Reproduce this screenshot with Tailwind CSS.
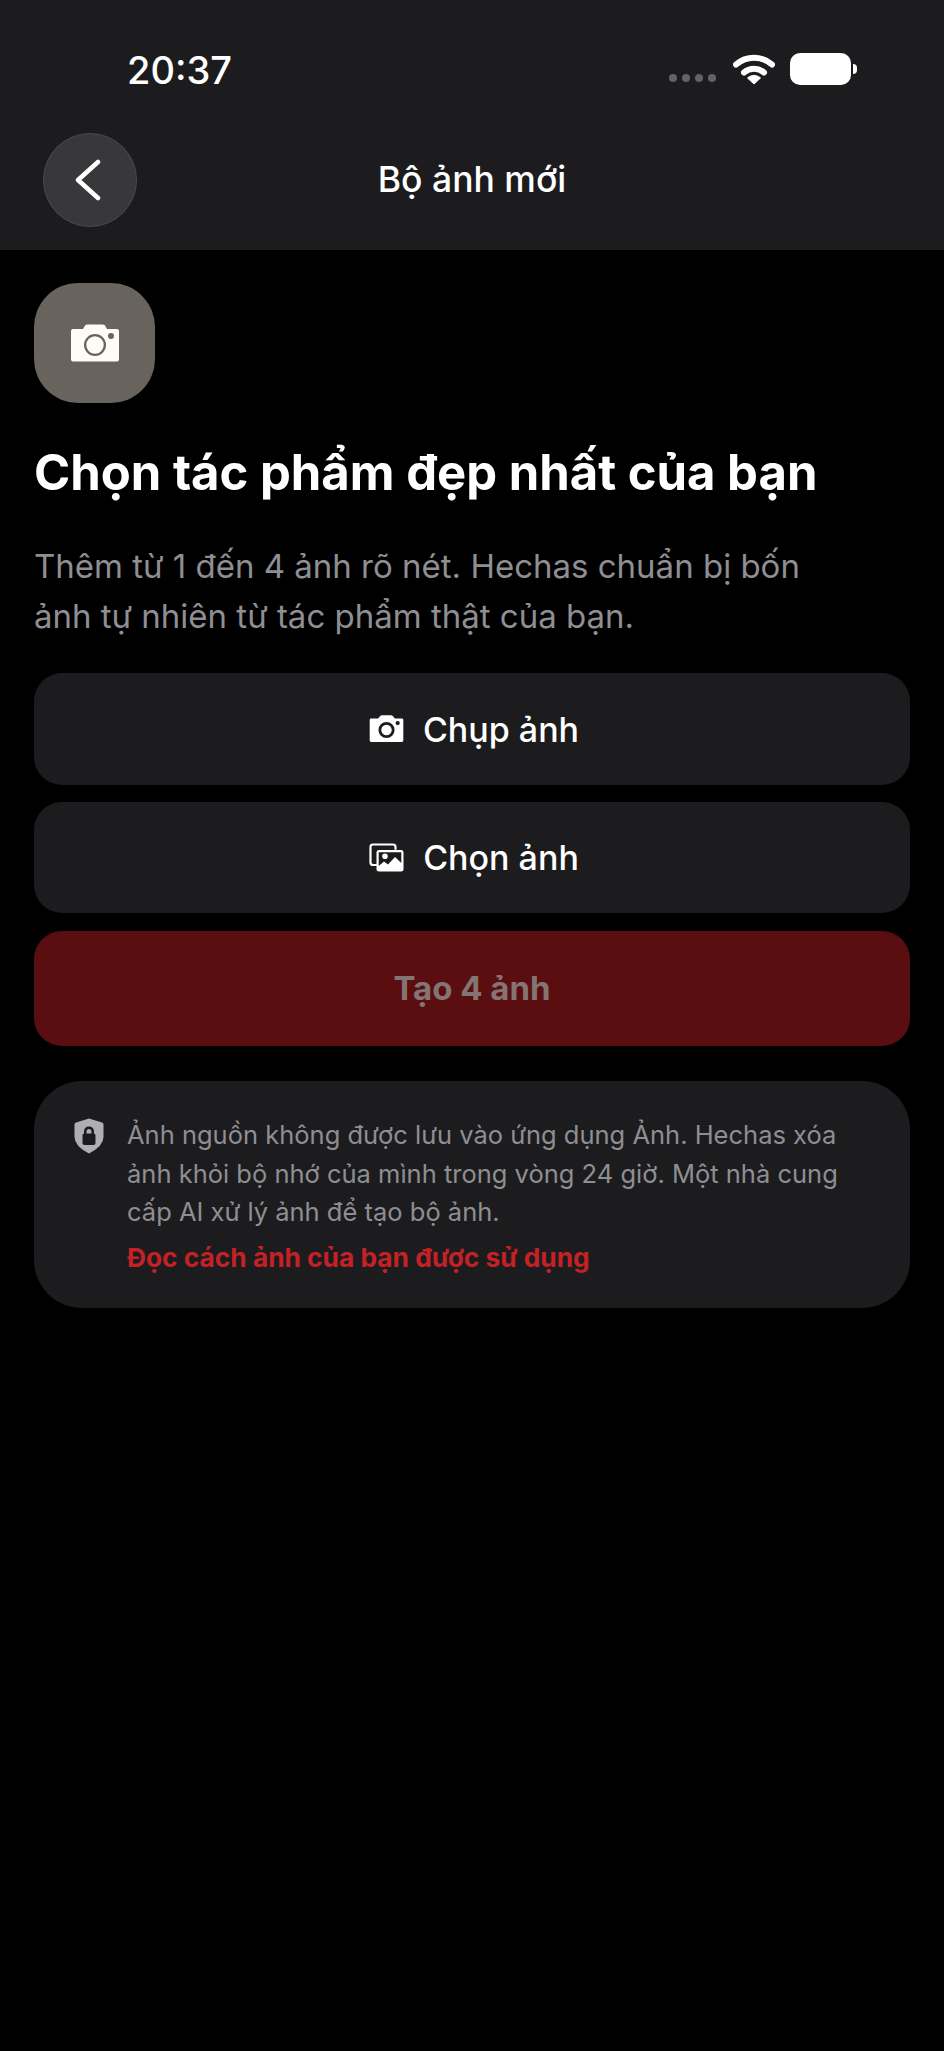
<!DOCTYPE html>
<html lang="vi">
<head>
  <meta charset="UTF-8" />
  <meta name="viewport" content="width=device-width, initial-scale=1.0" />
  <title>Bộ ảnh mới</title>
  <script src="https://cdn.jsdelivr.net/npm/@tailwindcss/browser@4"></script>
</head>
<body class="bg-black font-['Inter',sans-serif] text-white">
  <div class="w-[944px] h-[2051px] bg-black overflow-hidden">

    <!-- Header -->
    <header class="h-[250px] bg-[#1c1c1e] relative">
      <div class="h-[133px] flex items-start">
        <div class="ml-[127px] mt-[48px] text-[38px] leading-[44px] font-medium">20:37</div>
        <div class="ml-auto mr-[87px] mt-[53px] flex items-center">
          <div class="flex gap-[5px] mt-[17px] mr-[17px]">
            <span class="w-[8px] h-[8px] rounded-full bg-[#636366]"></span>
            <span class="w-[8px] h-[8px] rounded-full bg-[#636366]"></span>
            <span class="w-[8px] h-[8px] rounded-full bg-[#636366]"></span>
            <span class="w-[8px] h-[8px] rounded-full bg-[#636366]"></span>
          </div>
          <svg class="w-[42px] h-[32px]" viewBox="0 0 42 32" fill="none">
            <path d="M3 11.5C13.5 2.5 28.5 2.5 39 11.5" stroke="#fff" stroke-width="6" stroke-linecap="round" />
            <path d="M11 19.5C16.5 14.5 25.5 14.5 31 19.5" stroke="#fff" stroke-width="6" stroke-linecap="round" />
            <path d="M21 31L14.5 25C18.5 21.5 23.5 21.5 27.5 25Z" fill="#fff" stroke="#fff" stroke-width="1" stroke-linejoin="round" />
          </svg>
          <div class="ml-[15px] w-[61px] h-[32px] rounded-[10px] bg-white"></div>
          <div class="ml-[2px] w-[4px] h-[10px] rounded-r-full bg-white"></div>
        </div>
      </div>
      <div class="flex items-center h-[94px] pl-[43px]">
        <button class="w-[94px] h-[94px] rounded-full bg-[#38383a] border border-[#4a4a4c] flex items-center justify-center">
          <svg class="w-[30px] h-[44px]" viewBox="0 0 30 44" fill="none">
            <path d="M23 4L3 22L23 40" stroke="#fff" stroke-width="4.5" stroke-linecap="round" stroke-linejoin="round" />
          </svg>
        </button>
      </div>
      <!-- title is centred over the whole bar -->
      <h2 class="absolute left-0 right-0 top-[158px] text-center text-[35.5px] leading-[44px] font-medium">Bộ ảnh mới</h2>
    </header>

    <main class="px-[34px] pt-[33px]">
      <div class="w-[121px] h-[120px] rounded-[44px] bg-[#68635c] flex items-center justify-center">
        <svg class="w-[50px] h-[40px]" viewBox="0 0 50 40">
          <path fill="#fffcf6" fill-rule="evenodd" d="M3 6H13L15 2.500Q16 1.500 17.500 1.500H32.500Q34 1.500 35 2.500L37 6H47Q49 6 49 8V36.500Q49 38.500 47 38.500H3Q1 38.500 1 36.500V8Q1 6 3 6ZM25 11A11 11 0 1 0 25 33A11 11 0 1 0 25 11ZM25 13.300A8.700 8.700 0 1 1 25 30.700A8.700 8.700 0 1 1 25 13.300ZM41 10A3 3 0 1 0 41 16A3 3 0 1 0 41 10Z" />
        </svg>
      </div>

      <h1 class="mt-[40px] text-[49px] leading-[60px] font-bold whitespace-nowrap">Chọn tác phẩm đẹp nhất của bạn</h1>
      <p class="mt-[38px] text-[33px] leading-[50px] text-[#8e8e93] whitespace-nowrap">Thêm từ 1 đến 4 ảnh rõ nét. Hechas chuẩn bị bốn<br />ảnh tự nhiên từ tác phẩm thật của bạn.</p>

      <div class="mt-[32px] flex flex-col">
        <button class="h-[112px] rounded-[28px] bg-[#1c1c1e] flex items-center justify-center gap-[19px] pl-[4px] text-[34px] font-medium">
          <svg class="w-[35px] h-[28px]" viewBox="0 0 50 40">
            <path fill="#fff" fill-rule="evenodd" d="M3 5H13L16 1.500Q17 0.500 18.500 0.500H31.500Q33 0.500 34 1.500L37 5H47Q49 5 49 7V36.500Q49 38.500 47 38.500H3Q1 38.500 1 36.500V7Q1 5 3 5ZM25 10A11.500 11.500 0 1 0 25 33A11.500 11.500 0 1 0 25 10ZM25 14A7.500 7.500 0 1 1 25 29A7.500 7.500 0 1 1 25 14ZM41 8.500A3 3 0 1 0 41 14.500A3 3 0 1 0 41 8.500Z" />
          </svg>
          Chụp ảnh
        </button>
        <button class="mt-[17px] h-[111px] rounded-[28px] bg-[#1c1c1e] flex items-center justify-center gap-[19px] pl-[4px] text-[34px] font-medium">
          <svg class="w-[35px] h-[29px]" viewBox="0 0 35 29" fill="none">
            <path d="M7 22H4Q1.500 22 1.500 19.500V4Q1.500 1.500 4 1.500H24Q26.500 1.500 26.500 4V6" stroke="#fff" stroke-width="2.200" stroke-linecap="round" />
            <path fill="#fff" fill-rule="evenodd" d="M10 7H32Q34.500 7 34.500 9.500V26Q34.500 28.500 32 28.500H10Q7.500 28.500 7.500 26V9.500Q7.500 7 10 7ZM16 10.500A2.800 2.800 0 1 0 16 16.100A2.800 2.800 0 1 0 16 10.500ZM9.700 9.200V23L15 18.500L19 21.500L26 14L32.300 20V9.200Z" />
          </svg>
          Chọn ảnh
        </button>
        <button class="mt-[18px] h-[115px] rounded-[28px] bg-[#5a0e0f] text-[33px] font-bold text-[#857474]">Tạo 4 ảnh</button>
      </div>

      <section class="mt-[35px] h-[227px] rounded-[48px] bg-[#1c1c1e] flex pl-[40px] pt-[35px]">
        <svg class="w-[30px] h-[36px] mt-[2px] shrink-0" viewBox="0 0 30 36">
          <path fill="#aeaeb5" fill-rule="evenodd" d="M15 0.500L28 4.500Q29.500 5 29.500 6.500V19Q29.500 28 15 35.500Q0.500 28 0.500 19V6.500Q0.500 5 2 4.500ZM15 8.500Q10 8.500 10 14V15.500Q8.500 15.500 8.500 17.500V25Q8.500 27 10.500 27H19.500Q21.500 27 21.500 25V17.500Q21.500 15.500 20 15.500V14Q20 8.500 15 8.500ZM15 11Q17.500 11 17.500 14V15.500H12.500V14Q12.500 11 15 11Z" />
        </svg>
        <div class="ml-[23px]">
          <p class="text-[25.500px] leading-[38.500px] text-[#8e8e93] whitespace-nowrap">Ảnh nguồn không được lưu vào ứng dụng Ảnh. Hechas xóa<br />ảnh khỏi bộ nhớ của mình trong vòng 24 giờ. Một nhà cung<br />cấp AI xử lý ảnh để tạo bộ ảnh.</p>
          <a class="block mt-[6px] text-[26.300px] leading-[39px] font-bold text-[#c42126] whitespace-nowrap">Đọc cách ảnh của bạn được sử dụng</a>
        </div>
      </section>
    </main>
  </div>
</body>
</html>
